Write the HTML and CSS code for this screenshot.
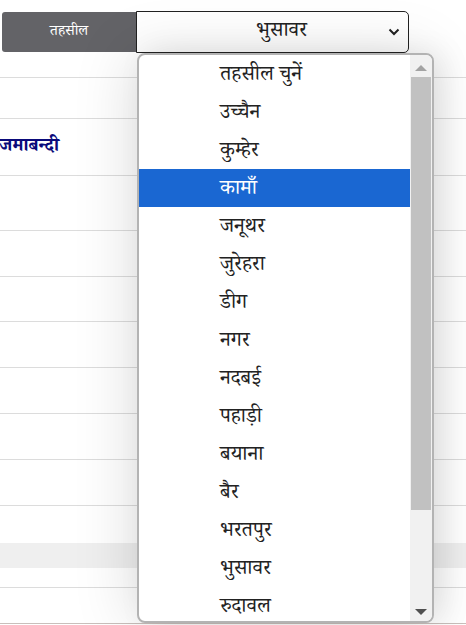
FILE: index.html
```html
<!DOCTYPE html>
<html lang="hi">
<head>
<meta charset="utf-8">
<title>तहसील</title>
<link rel="stylesheet" href="styles.css">
</head>
<body>
<div class="page">
  <div class="filter">
    <div class="label">तहसील</div>
    <div class="select">
      <span class="select-value">भुसावर</span>
      <svg class="chev" width="12" height="8" viewBox="0 0 12 8"><path d="M1.5 1.5 L6 6 L10.5 1.5" fill="none" stroke="#222" stroke-width="2"/></svg>
    </div>
  </div>
  <div class="table">
    <div class="row h25"></div>
    <div class="row h41"></div>
    <div class="row h57"><span class="bold">जमाबन्दी</span></div>
    <div class="row h55"></div>
    <div class="row h46"></div>
    <div class="row h45"></div>
    <div class="row h46"></div>
    <div class="row h46"></div>
    <div class="row h46"></div>
    <div class="row h46"></div>
    <div class="row h37 noline"></div>
    <div class="row band"></div>
    <div class="row h20"></div>
    <div class="row h36 last"></div>
  </div>

  <div class="dropdown">
    <ul class="options">
      <li>तहसील चुनें</li>
      <li>उच्चैन</li>
      <li>कुम्हेर</li>
      <li class="sel">कामाँ</li>
      <li>जनूथर</li>
      <li>जुरेहरा</li>
      <li>डीग</li>
      <li>नगर</li>
      <li>नदबई</li>
      <li>पहाड़ी</li>
      <li>बयाना</li>
      <li>बैर</li>
      <li>भरतपुर</li>
      <li>भुसावर</li>
      <li>रुदावल</li>
    </ul>
    <div class="scrollbar">
      <div class="arrow up"></div>
      <div class="thumb"></div>
      <div class="arrow down"></div>
    </div>
  </div>
</div>
</body>
</html>
```

FILE: styles.css
```css
html, body {
  margin: 0;
  padding: 0;
  background: #fff;
}
body {
  font-family: "Noto Serif Devanagari", "Lohit Devanagari", "Noto Sans Devanagari", "FreeSerif", "Noto Sans", sans-serif;
  width: 466px;
  height: 625px;
  overflow: hidden;
}
.page {
  position: relative;
  width: 466px;
  height: 625px;
}
.filter {
  display: flex;
  align-items: flex-start;
  padding: 11px 0 0 2px;
  height: 42px;
  box-sizing: border-box;
}
.label {
  width: 134px;
  height: 40px;
  margin-top: 1px;
  background: #636367;
  color: #fff;
  font-size: 15px;
  display: flex;
  align-items: center;
  justify-content: center;
  border-radius: 3px 0 0 3px;
}
.select {
  width: 273px;
  height: 42px;
  box-sizing: border-box;
  border: 1px solid #222;
  border-radius: 0 5px 5px 0;
  background: #fff;
  display: flex;
  align-items: center;
  padding: 0 8px 0 0;
}
.select-value {
  flex: 1;
  text-align: center;
  font-size: 21px;
  color: #222;
  padding-left: 38px;
  margin-top: 1px;
}
.table {
  display: flex;
  flex-direction: column;
  margin-top: 11px;
}
.row {
  border-bottom: 1px solid #dcdcdc;
  box-sizing: border-box;
  display: flex;
  align-items: center;
}
.h25 { height: 25px; }
.h41 { height: 41px; }
.h57 { height: 57px; }
.h55 { height: 55px; }
.h46 { height: 46px; }
.h45 { height: 45px; }
.h37 { height: 37px; }
.h20 { height: 20px; }
.h36 { height: 36px; }
.noline { border-bottom: none; }
.band {
  height: 25px;
  background: #efefef;
  border-bottom: none;
}
.last { border-bottom: 1px solid #c9bfbb; }
.bold {
  font-weight: bold;
  color: #0a0a7a;
  font-size: 19px;
  margin-left: -1px;
  margin-top: 2px;
}
.dropdown {
  position: absolute;
  left: 137px;
  top: 53px;
  width: 297px;
  height: 570px;
  box-sizing: border-box;
  border: 2px solid #b3b3b3;
  border-radius: 8px;
  background: #fff;
  box-shadow: -6px 0 60px rgba(0,0,0,0.13), 10px 0 30px rgba(0,0,0,0.08);
  overflow: hidden;
  display: flex;
}
.options {
  list-style: none;
  margin: 0;
  padding: 0;
  flex: 1;
  overflow: hidden;
}
.options li {
  height: 38px;
  line-height: 43px;
  padding-left: 81px;
  font-size: 21px;
  color: #222;
  white-space: nowrap;
}
.options li.sel {
  background: #1a67d2;
  color: #fff;
}
.scrollbar {
  width: 22px;
  background: #f1f1f1;
  display: flex;
  flex-direction: column;
  align-items: center;
}
.thumb {
  width: 20px;
  height: 433px;
  background: #c1c1c1;
  margin-top: 6px;
}
.arrow {
  width: 0;
  height: 0;
  border-left: 6px solid transparent;
  border-right: 6px solid transparent;
}
.arrow.up {
  border-bottom: 6px solid #a3a3a3;
  margin-top: 10px;
}
.arrow.down {
  border-top: 6px solid #505050;
  margin-top: auto;
  margin-bottom: 6px;
}
```
